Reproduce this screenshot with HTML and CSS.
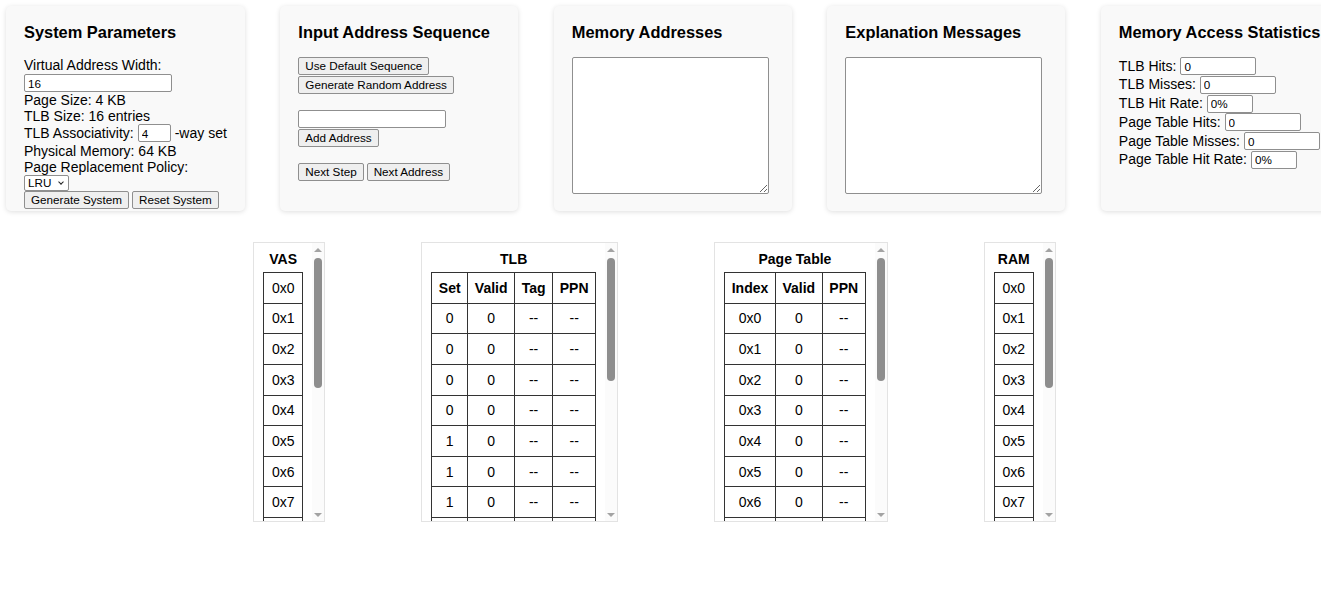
FILE: index.html
```html
<!DOCTYPE html>
<html lang="en">
<head>
<meta charset="utf-8">
<title>TLB Simulator</title>
<link rel="stylesheet" href="styles.css">
</head>
<body>
<div class="panels">
  <section class="panel">
    <h3>System Parameters</h3>
    <div class="line">Virtual Address Width:</div>
    <input class="field field-wide field-gap" type="text" value="16">
    <div class="line">Page Size: 4 KB</div>
    <div class="line">TLB Size: 16 entries</div>
    <div class="inline-row">TLB Associativity: <input class="field field-tiny" type="text" value="4"> -way set</div>
    <div class="line">Physical Memory: 64 KB</div>
    <div class="line">Page Replacement Policy:</div>
    <span class="select-wrap"><select class="policy"><option>LRU</option><option>FIFO</option></select></span>
    <div class="btn-row">
      <button class="btn">Generate System</button>
      <button class="btn">Reset System</button>
    </div>
  </section>

  <section class="panel">
    <h3>Input Address Sequence</h3>
    <div class="stack">
      <button class="btn">Use Default Sequence</button>
      <button class="btn">Generate Random Address</button>
    </div>
    <div class="stack group">
      <input class="field field-wide" type="text">
      <button class="btn">Add Address</button>
    </div>
    <div class="btn-row group">
      <button class="btn">Next Step</button>
      <button class="btn">Next Address</button>
    </div>
  </section>

  <section class="panel">
    <h3>Memory Addresses</h3>
    <textarea class="box-text"></textarea>
  </section>

  <section class="panel">
    <h3>Explanation Messages</h3>
    <textarea class="box-text"></textarea>
  </section>

  <section class="panel">
    <h3 class="nowrap">Memory Access Statistics</h3>
    <div class="stats">
      <div class="stat">TLB Hits: <input class="field field-num" type="text" value="0"></div>
      <div class="stat">TLB Misses: <input class="field field-num" type="text" value="0"></div>
      <div class="stat">TLB Hit Rate: <input class="field field-rate" type="text" value="0%"></div>
      <div class="stat">Page Table Hits: <input class="field field-num" type="text" value="0"></div>
      <div class="stat">Page Table Misses: <input class="field field-num" type="text" value="0"></div>
      <div class="stat">Page Table Hit Rate: <input class="field field-rate" type="text" value="0%"></div>
    </div>
  </section>
</div>

<div class="tables">
  <div class="mem-box">
    <div class="mem-scroll">
      <div class="mem-title">VAS</div>
      <table class="grid">
        <tr><td>0x0</td></tr><tr><td>0x1</td></tr><tr><td>0x2</td></tr><tr><td>0x3</td></tr>
        <tr><td>0x4</td></tr><tr><td>0x5</td></tr><tr><td>0x6</td></tr><tr><td>0x7</td></tr>
        <tr><td>0x8</td></tr><tr><td>0x9</td></tr><tr><td>0xA</td></tr><tr><td>0xB</td></tr>
        <tr><td>0xC</td></tr><tr><td>0xD</td></tr><tr><td>0xE</td></tr><tr><td>0xF</td></tr>
      </table>
    </div>
    <div class="scrollbar" aria-hidden="true">
      <span class="sb-btn"><span class="arrow-up"></span></span>
      <span class="sb-track"><span class="sb-thumb thumb-long"></span></span>
      <span class="sb-btn"><span class="arrow-down"></span></span>
    </div>
  </div>

  <div class="mem-box">
    <div class="mem-scroll">
      <div class="mem-title">TLB</div>
      <table class="grid">
        <tr><th>Set</th><th>Valid</th><th>Tag</th><th>PPN</th></tr>
        <tr><td>0</td><td>0</td><td>--</td><td>--</td></tr>
        <tr><td>0</td><td>0</td><td>--</td><td>--</td></tr>
        <tr><td>0</td><td>0</td><td>--</td><td>--</td></tr>
        <tr><td>0</td><td>0</td><td>--</td><td>--</td></tr>
        <tr><td>1</td><td>0</td><td>--</td><td>--</td></tr>
        <tr><td>1</td><td>0</td><td>--</td><td>--</td></tr>
        <tr><td>1</td><td>0</td><td>--</td><td>--</td></tr>
        <tr><td>1</td><td>0</td><td>--</td><td>--</td></tr>
        <tr><td>2</td><td>0</td><td>--</td><td>--</td></tr>
        <tr><td>2</td><td>0</td><td>--</td><td>--</td></tr>
        <tr><td>2</td><td>0</td><td>--</td><td>--</td></tr>
        <tr><td>2</td><td>0</td><td>--</td><td>--</td></tr>
        <tr><td>3</td><td>0</td><td>--</td><td>--</td></tr>
        <tr><td>3</td><td>0</td><td>--</td><td>--</td></tr>
        <tr><td>3</td><td>0</td><td>--</td><td>--</td></tr>
        <tr><td>3</td><td>0</td><td>--</td><td>--</td></tr>
      </table>
    </div>
    <div class="scrollbar" aria-hidden="true">
      <span class="sb-btn"><span class="arrow-up"></span></span>
      <span class="sb-track"><span class="sb-thumb thumb-short"></span></span>
      <span class="sb-btn"><span class="arrow-down"></span></span>
    </div>
  </div>

  <div class="mem-box">
    <div class="mem-scroll">
      <div class="mem-title">Page Table</div>
      <table class="grid">
        <tr><th>Index</th><th>Valid</th><th>PPN</th></tr>
        <tr><td>0x0</td><td>0</td><td>--</td></tr>
        <tr><td>0x1</td><td>0</td><td>--</td></tr>
        <tr><td>0x2</td><td>0</td><td>--</td></tr>
        <tr><td>0x3</td><td>0</td><td>--</td></tr>
        <tr><td>0x4</td><td>0</td><td>--</td></tr>
        <tr><td>0x5</td><td>0</td><td>--</td></tr>
        <tr><td>0x6</td><td>0</td><td>--</td></tr>
        <tr><td>0x7</td><td>0</td><td>--</td></tr>
        <tr><td>0x8</td><td>0</td><td>--</td></tr>
        <tr><td>0x9</td><td>0</td><td>--</td></tr>
        <tr><td>0xA</td><td>0</td><td>--</td></tr>
        <tr><td>0xB</td><td>0</td><td>--</td></tr>
        <tr><td>0xC</td><td>0</td><td>--</td></tr>
        <tr><td>0xD</td><td>0</td><td>--</td></tr>
        <tr><td>0xE</td><td>0</td><td>--</td></tr>
        <tr><td>0xF</td><td>0</td><td>--</td></tr>
      </table>
    </div>
    <div class="scrollbar" aria-hidden="true">
      <span class="sb-btn"><span class="arrow-up"></span></span>
      <span class="sb-track"><span class="sb-thumb thumb-short"></span></span>
      <span class="sb-btn"><span class="arrow-down"></span></span>
    </div>
  </div>

  <div class="mem-box">
    <div class="mem-scroll">
      <div class="mem-title">RAM</div>
      <table class="grid">
        <tr><td>0x0</td></tr><tr><td>0x1</td></tr><tr><td>0x2</td></tr><tr><td>0x3</td></tr>
        <tr><td>0x4</td></tr><tr><td>0x5</td></tr><tr><td>0x6</td></tr><tr><td>0x7</td></tr>
        <tr><td>0x8</td></tr><tr><td>0x9</td></tr><tr><td>0xA</td></tr><tr><td>0xB</td></tr>
        <tr><td>0xC</td></tr><tr><td>0xD</td></tr><tr><td>0xE</td></tr><tr><td>0xF</td></tr>
      </table>
    </div>
    <div class="scrollbar" aria-hidden="true">
      <span class="sb-btn"><span class="arrow-up"></span></span>
      <span class="sb-track"><span class="sb-thumb thumb-long"></span></span>
      <span class="sb-btn"><span class="arrow-down"></span></span>
    </div>
  </div>
</div>
</body>
</html>
```

FILE: styles.css
```css
html, body {
  overflow-x: hidden;
}
body {
  margin: 0;
  font-family: "Liberation Sans", Arial, sans-serif;
  font-size: 14px;
  color: #000;
  background: #fff;
}

.panels {
  display: flex;
  gap: 35.5px;
  padding: 6px;
}
.panel {
  flex: 0 0 238px;
  box-sizing: border-box;
  height: 205px;
  padding: 17px 18px 0;
  background: #f9f9f9;
  border-radius: 5px;
  box-shadow: 0 1px 5px rgba(0, 0, 0, 0.13);
  display: flex;
  flex-direction: column;
  align-items: flex-start;
}
.panel h3 {
  margin: 0 0 15px;
  font-size: 16.4px;
  line-height: 19px;
  font-weight: bold;
}
.nowrap { white-space: nowrap; }

.line {
  line-height: 16px;
  height: 16px;
  white-space: nowrap;
}
.inline-row {
  display: flex;
  align-items: center;
  gap: 4px;
  height: 18px;
  margin: 0 0 1px;
  white-space: nowrap;
}

.field {
  box-sizing: border-box;
  height: 18px;
  margin: 0;
  padding: 1px 3px;
  font-family: "Liberation Sans", Arial, sans-serif;
  font-size: 11.7px;
  border: 1px solid #8f8f8f;
  border-radius: 2px;
  background: #fff;
  color: #000;
}
.field-wide { width: 148px; }
.field-gap { margin-top: 1px; }
.field-tiny { width: 33px; }
.field-num { width: 76px; }
.field-rate { width: 46px; }

.select-wrap {
  position: relative;
  display: inline-block;
  height: 16px;
}
.select-wrap::after {
  content: "";
  position: absolute;
  top: 5px;
  right: 6px;
  width: 3px;
  height: 3px;
  border-right: 1.5px solid #222;
  border-bottom: 1.5px solid #222;
  transform: rotate(45deg);
  pointer-events: none;
}
.policy {
  -webkit-appearance: none;
  appearance: none;
  display: block;
  box-sizing: border-box;
  width: 45px;
  height: 16px;
  margin: 0;
  padding: 0 0 0 3px;
  font-family: "Liberation Sans", Arial, sans-serif;
  font-size: 11.7px;
  line-height: 14px;
  border: 1px solid #8f8f8f;
  border-radius: 2px;
  background: #fff;
  color: #000;
}

.btn {
  box-sizing: border-box;
  height: 18px;
  margin: 0;
  padding: 0 6px 1px;
  font-family: "Liberation Sans", Arial, sans-serif;
  font-size: 11.7px;
  color: #000;
  background: #efefef;
  border: 1px solid #8f8f8f;
  border-radius: 2px;
  white-space: nowrap;
}
.btn-row {
  display: flex;
  gap: 3px;
}
.stack {
  display: flex;
  flex-direction: column;
  align-items: flex-start;
  gap: 1px;
}
.group { margin-top: 16px; }

.box-text {
  box-sizing: border-box;
  width: 197px;
  height: 137px;
  margin: 0;
  border: 1px solid #8f8f8f;
  border-radius: 2px;
  background: #fff;
  resize: both;
}

.stats {
  display: flex;
  flex-direction: column;
  gap: 0.8px;
}
.stat {
  display: flex;
  align-items: baseline;
  gap: 4px;
  height: 18px;
  line-height: 16px;
  white-space: nowrap;
}

.tables {
  display: flex;
  justify-content: center;
  align-items: flex-start;
  gap: 96px;
  margin-top: 25px;
  padding-right: 12px;
}
.mem-box {
  box-sizing: border-box;
  height: 280px;
  border: 1px solid #e3e3e3;
  background: #fff;
  display: flex;
}
.mem-scroll {
  overflow: hidden;
  padding: 8px 9px 0;
}
.mem-title {
  text-align: center;
  font-weight: bold;
  line-height: 16px;
  margin-bottom: 5px;
}
.grid {
  border-collapse: collapse;
}
.grid th,
.grid td {
  border: 1px solid #333;
  height: 30.65px;
  padding: 0 6.6px;
  text-align: center;
  font-size: 14px;
  line-height: 16px;
  box-sizing: border-box;
}
.grid th { font-weight: bold; }

.scrollbar {
  flex: 0 0 12px;
  display: flex;
  flex-direction: column;
  background: #fbfbfb;
}
.sb-btn {
  flex: 0 0 13px;
  display: flex;
  align-items: center;
  justify-content: center;
}
.arrow-up,
.arrow-down {
  width: 0;
  height: 0;
  border-left: 4px solid transparent;
  border-right: 4px solid transparent;
}
.arrow-up { border-bottom: 4px solid #a3a3a3; }
.arrow-down { border-top: 4px solid #a3a3a3; }
.sb-track {
  flex: 1;
  display: flex;
  justify-content: center;
  padding-top: 2px;
}
.sb-thumb {
  width: 8px;
  border-radius: 4px;
  background: #8e8e8e;
}
.thumb-long { height: 130px; }
.thumb-short { height: 123px; }
```
